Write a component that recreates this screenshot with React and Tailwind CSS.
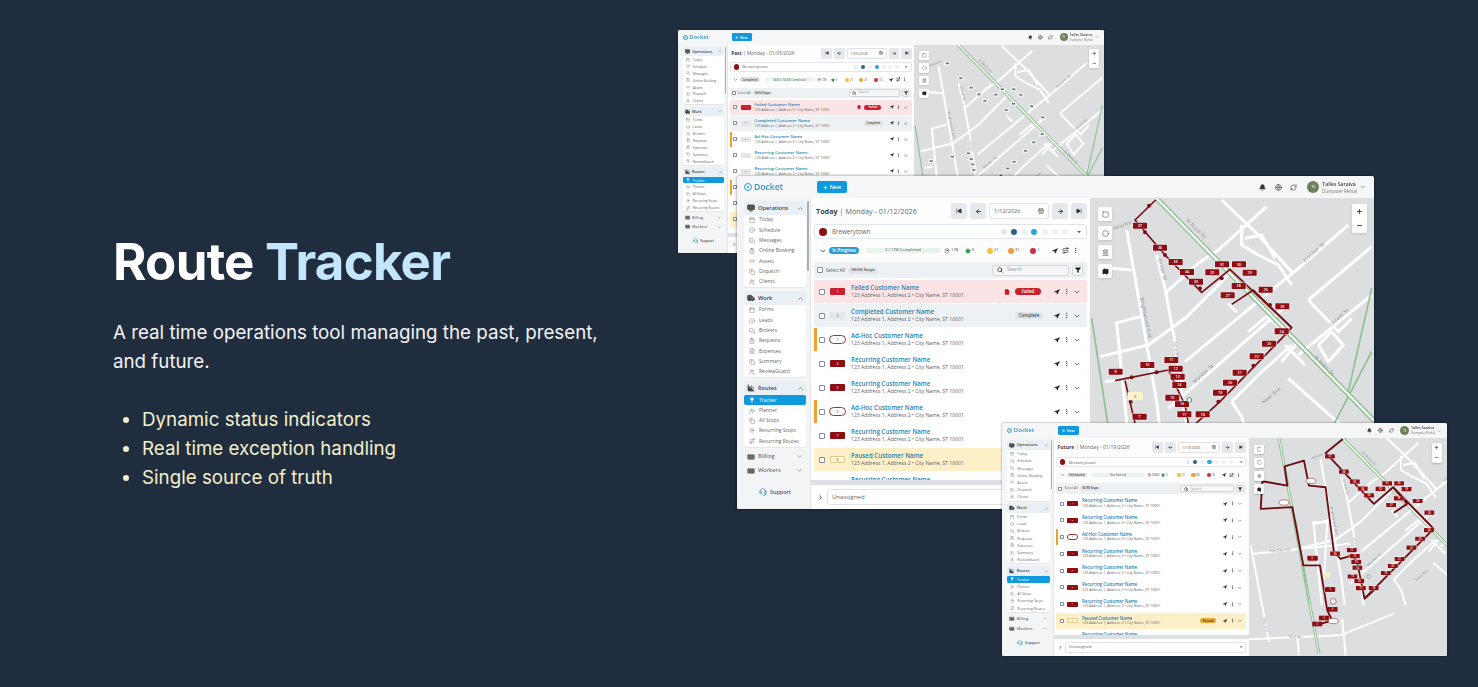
import {
  Calendar, CircleDot, MessagesSquare, ClipboardList, Link2, Copy, Users, FileText, Truck, Monitor,
  ChartColumn, Lightbulb, UserPlus, MapPin, Route, CreditCard, IdCard, ChevronUp, ChevronDown, ChevronRight,
  Headset, Search, Funnel, EllipsisVertical, Navigation, Star, Plus, ArrowLeft, ArrowRight, SkipBack, SkipForward,
  Square, Circle, Landmark, Map, Bell, Globe, RefreshCw, Minus, File, CalendarDays,
} from 'lucide-react';

const SIDEBAR = [
  {
    title: 'Operations', icon: Monitor, items: [
      ['Today', Calendar], ['Schedule', CircleDot], ['Messages', MessagesSquare], ['Online Booking', ClipboardList],
      ['Assets', Link2], ['Dispatch', Copy], ['Clients', Users],
    ],
  },
  {
    title: 'Work', icon: Truck, items: [
      ['Forms', Calendar], ['Leads', CircleDot], ['Brokers', MessagesSquare], ['Requests', ClipboardList],
      ['Expenses', FileText], ['Summary', Copy], ['ReviewGuard', Users],
    ],
  },
  {
    title: 'Routes', icon: ChartColumn, items: [
      ['Tracker', Lightbulb], ['Planner', UserPlus], ['All Stops', Copy], ['Recurring Stops', MapPin], ['Recurring Routes', Route],
    ],
  },
];

const ROWS_PAST = [
  ['failed', 'Failed Customer Name', '1'], ['completed', 'Completed Customer Name', '2'], ['adhocgray', 'Ad-Hoc Customer Name', '3'],
  ['recgray', 'Recurring Customer Name', '4'], ['recgray', 'Recurring Customer Name', '5'], ['adhocgray', 'Ad-Hoc Customer Name', '6'],
  ['recgray', 'Recurring Customer Name', '7'], ['paused', 'Paused Customer Name', '8'],
];
const ROWS_TODAY = [
  ['failed', 'Failed Customer Name', '1'], ['completed', 'Completed Customer Name', '2'], ['adhoc', 'Ad-Hoc Customer Name', '3'],
  ['recurring', 'Recurring Customer Name', '4'], ['recurring', 'Recurring Customer Name', '5'], ['adhoc', 'Ad-Hoc Customer Name', '6'],
  ['recurring', 'Recurring Customer Name', '7'], ['paused', 'Paused Customer Name', '8'], ['recurring', 'Recurring Customer Name', '9'],
];
const ROWS_FUTURE = [
  ['recurring', 'Recurring Customer Name', '1'], ['recurring', 'Recurring Customer Name', '2'], ['adhoc', 'Ad-Hoc Customer Name', '3'],
  ['recurring', 'Recurring Customer Name', '4'], ['recurring', 'Recurring Customer Name', '5'], ['recurring', 'Recurring Customer Name', '6'],
  ['recurring', 'Recurring Customer Name', '7'], ['pausedpill', 'Paused Customer Name', '8'], ['recurring', 'Recurring Customer Name', '9'],
];

// map drawn in 3x units, same streets in all three windows
const ROADS = [
  '125,165 170,420 215,680 228,790', '215,240 240,340 270,500 310,790', '90,445 165,425', '95,445 130,790',
  '45,545 190,510 300,430 440,290', '240,355 340,265 400,225 545,95', '410,75 510,170 620,290', '300,560 640,280 790,150',
  '250,700 600,395', '440,680 520,600 620,510', '440,680 470,725 490,790', '610,610 790,770', '490,470 545,425 640,500 590,560',
  '600,510 660,570', '700,510 740,470 775,510 730,560 700,510', '640,540 860,360', '670,375 760,470 800,430', '670,375 860,215',
  '470,150 470,210 520,240 580,270 620,330', '480,190 530,180 570,250', '60,620 100,615', '75,280 140,285', '430,385 455,412',
];
const GREEN = ['20,430 75,790', '725,790 860,530', '790,650 860,340'];
const STREETS = [
  ['N Main St', 330, 165, 45], ['N Main St', 715, 575, 45], ['Pioneer St', 690, 235, -42], ['Grove St', 228, 285, 75], ['Grove', 270, 525, 80],
  ['Brightwood Ave', 178, 430, 78], ['Warder St', 358, 600, -42], ['Neal Ave', 562, 665, -40], ['Locust St', 765, 430, -40], ['Atlantic', 115, 155, -20],
];
const LABELS = [
  [37, 165, 152], [36, 225, 218], [35, 272, 261], [34, 306, 291], [33, 333, 320], [32, 382, 292], [31, 411, 268], [30, 462, 268], [29, 494, 293],
  [28, 461, 333], [27, 428, 361], [26, 542, 344], [25, 592, 394], [24, 590, 469], [23, 552, 506], [22, 515, 544], [21, 464, 593], [20, 435, 623],
  [19, 405, 653], [18, 353, 718], [17, 298, 718], [16, 291, 687], [15, 262, 668], [14, 283, 630], [13, 278, 605], [12, 272, 581], [11, 259, 555],
  [10, 187, 570], [9, 92, 590], [7, 164, 725],
];
const ROUTE_MAIN = [
  '212,75 150,135 240,240 350,352 435,283 620,458 590,490 405,680 333,745',
  '620,458 505,345 440,388', '90,617 250,585 300,690 310,745', '120,617 135,680 150,745',
];
const ARROWS = [[192, 92], [180, 172], [240, 240], [345, 340], [410, 310], [505, 572], [400, 680], [140, 607], [215, 592], [137, 680], [555, 390]];

function StreetLayer() {
  return (
    <>
      {ROADS.map((d) => <polyline key={d} points={d} fill="none" stroke="#ffffff" strokeWidth="9" strokeLinejoin="round" />)}
      {GREEN.map((d) => <polyline key={d} points={d} fill="none" stroke="#8fbf92" strokeWidth="5" />)}
      <polyline points="215,70 870,740" fill="none" stroke="#8fbf92" strokeWidth="15" />
      <polyline points="215,70 870,740" fill="none" stroke="#f4f6f4" strokeWidth="7" />
      {STREETS.map(([t, x, y, r]) => (
        <text key={t + x} x={x} y={y} transform={`rotate(${r} ${x} ${y})`} textAnchor="middle" fontSize="15" fill="#868b90" letterSpacing="1">{t}</text>
      ))}
    </>
  );
}

function Flag({ n, x, y }) {
  return (
    <g>
      <rect x={x - 24} y={y - 11} width="48" height="22" fill="#ffffff" opacity="0.55" />
      <rect x={x - 21} y={y - 9} width="42" height="18" fill="#8f0d13" rx="1" />
      <text x={x} y={y + 4} textAnchor="middle" fontSize="11" fontWeight="600" fill="#ffffff">{n}</text>
    </g>
  );
}

function MapControls() {
  return (
    <>
      <div className="absolute left-[8px] top-[9px] flex flex-col gap-[5px]">
        {[Square, Circle, Landmark, Map].map((Ico, i) => (
          <div key={i} className="w-[14px] h-[14px] bg-white rounded-[2px] flex items-center justify-center shadow-sm">
            <Ico size={7} className={i === 3 ? 'text-[#222] fill-[#222]' : 'text-[#555]'} />
          </div>
        ))}
      </div>
      <div className="absolute right-[7px] top-[6px] w-[15px] h-[29px] bg-white rounded-[2px] flex flex-col items-center justify-around shadow-sm">
        <Plus size={7} strokeWidth={3} className="text-[#333]" />
        <Minus size={7} strokeWidth={3} className="text-[#333]" />
      </div>
    </>
  );
}

function MapPanel({ mode }) {
  if (mode === 'future') {
    return (
      <div className="relative flex-1 bg-[#dcdee0] overflow-hidden">
        <svg viewBox="15 57 596 653" className="w-full h-full block" style={{ fontFamily: 'Open Sans, sans-serif' }}>
          <rect x="15" y="57" width="596" height="653" fill="#dcdee0" />
          <g fill="none" stroke="#ffffff" strokeWidth="6">
            <polyline points="30,405 320,375" />
            <polyline points="205,310 250,310 240,480" />
            <polyline points="20,380 75,670" />
            <polyline points="15,662 290,650 450,585" />
            <polyline points="160,650 165,710" />
            <polyline points="295,600 305,710" />
          </g>
          <polyline points="105,57 225,705" fill="none" stroke="#8fbf92" strokeWidth="9" />
          <polyline points="105,57 225,705" fill="none" stroke="#f4f6f4" strokeWidth="3" />
          <text x="108" y="398" textAnchor="middle" fontSize="10" fill="#868b90" transform="rotate(-5 108 398)">Five Oaks Ave</text>
          <text x="62" y="620" textAnchor="middle" fontSize="10" fill="#868b90" transform="rotate(78 62 620)">Morris St</text>
          <text x="155" y="658" textAnchor="middle" fontSize="10" fill="#868b90">Neal Ave</text>
          <g transform="translate(142.5 5.6) scale(0.7)">
            <StreetLayer />
          </g>
          <g fill="none" stroke="#6d0b10" strokeWidth="5.5" strokeLinejoin="round">
            <polyline points="297,60 245,102 258,115 390,255 448,205 570,330 500,400 362,540 340,430 325,410 290,420 270,400 245,205 195,200 180,125 122,142 130,200 55,187 50,270 145,265 178,440 228,440 250,575 265,605 215,620" />
            <polyline points="448,205 490,255 450,282" />
            <polyline points="362,540 400,505" />
          </g>
          <g transform="translate(142.5 5.6) scale(0.7)">
            {LABELS.map(([n, x, y]) => <Flag key={n} n={n} x={x} y={y} />)}
          </g>
          {[[205, 418, 6], [259, 512, 5], [266, 572, 4], [240, 598, 3], [220, 616, 2]].map(([x, y, n]) => (
            <g key={n}>
              <rect x={x - 15} y={y - 7} width="30" height="14" fill="#8f0d13" />
              <text x={x} y={y + 3} textAnchor="middle" fontSize="8" fill="#fff">{n}</text>
            </g>
          ))}
          <rect x="238" y="462" width="20" height="14" fill="#fbf0c0" />
          {[[120, 251], [201, 186], [268, 607]].map(([x, y]) => (
            <ellipse key={x} cx={x} cy={y} rx="15" ry="8" fill="#fff" stroke="#8f0d13" strokeWidth="1.5" />
          ))}
          <circle cx="268" cy="548" r="9" fill="#f3f3f3" stroke="#8f0d13" strokeWidth="1.5" />
          <circle cx="374" cy="473" r="5" fill="#fff" stroke="#3a9a55" strokeWidth="2" />
        </svg>
        <MapControls />
      </div>
    );
  }
  return (
    <div className="relative flex-1 bg-[#dcdee0] overflow-hidden">
      <svg viewBox="15 69 852 933" className="w-full h-full block" style={{ fontFamily: 'Open Sans, sans-serif' }}>
        <StreetLayer />
        {mode === 'today' && (
          <>
            {ROUTE_MAIN.map((d) => <polyline key={d} points={d} fill="none" stroke="#7a1016" strokeWidth="5" strokeLinejoin="round" />)}
            {ARROWS.map(([x, y]) => <circle key={x + '-' + y} cx={x} cy={y} r="6" fill="#7a1016" />)}
            {LABELS.map(([n, x, y]) => <Flag key={n} n={n} x={x} y={y} />)}
            <rect x="128" y="651" width="46" height="25" rx="2" fill="#fbf3cf" />
            <text x="151" y="668" textAnchor="middle" fontSize="11" fill="#6b5a10">8</text>
            <circle cx="313" cy="675" r="7" fill="#fff" stroke="#3a9a55" strokeWidth="3" />
          </>
        )}
        {mode === 'past' && LABELS.map(([n, x, y]) => (
          <g key={n}>
            <rect x={x - 13} y={y - 9} width="26" height="18" fill="#f2f3f4" />
            <rect x={x - 7} y={y - 4} width="14" height="7" fill="#6b7075" />
          </g>
        ))}
      </svg>
      <MapControls />
    </div>
  );
}

function Sidebar() {
  return (
    <div className="w-[73px] shrink-0 bg-[#f2f4f6] flex flex-col pl-[7px] pr-[4px] pt-[3px] gap-[4px] relative">
      {SIDEBAR.map((group) => (
        <div key={group.title} className="bg-white rounded-[3px] shadow-[0_1px_1px_rgba(0,0,0,0.06)]">
          <div className="h-[14px] bg-[#e9f0f5] rounded-t-[3px] flex items-center pl-[3px] pr-[2px] gap-[3px]">
            <group.icon size={8} className="text-[#333] fill-[#555]" />
            <span className="text-[5.6px] font-semibold text-[#444] flex-1">{group.title}</span>
            <ChevronUp size={7} className="text-[#555]" />
          </div>
          {group.items.map(([label, Ico]) => {
            const active = label === 'Tracker';
            return (
              <div key={label} className={`h-[10.3px] flex items-center gap-[4px] pl-[5px] rounded-[2px] ${active ? 'bg-[#0f9ae0] text-white' : 'text-[#666]'}`}>
                <Ico size={6} strokeWidth={1.5} className={active ? 'fill-white' : ''} />
                <span className="text-[5px] whitespace-nowrap">{label}</span>
              </div>
            );
          })}
        </div>
      ))}
      <div className="h-[12px] flex items-center px-[3px] gap-[3px] text-[#777]">
        <CreditCard size={8} className="fill-[#666]" />
        <span className="text-[5.6px] font-semibold flex-1">Billing</span>
        <ChevronDown size={7} />
      </div>
      <div className="h-[12px] -mt-[2px] flex items-center px-[3px] gap-[3px] text-[#777]">
        <IdCard size={8} className="fill-[#666]" />
        <span className="text-[5.6px] font-semibold flex-1">Workers</span>
        <ChevronDown size={7} />
      </div>
      <div className="mt-[7px] flex items-center justify-center gap-[3px] text-[#556]">
        <Headset size={8} className="text-[#2b8fc4]" />
        <span className="text-[5.4px] font-semibold">Support</span>
      </div>
      <div className="absolute right-[1px] top-[3px] w-[2px] h-[70px] bg-[#a9afb5] rounded" />
    </div>
  );
}

function Badge({ kind, n }) {
  if (kind === 'failed') return <div className="w-[15px] h-[7px] bg-[#c8202f] rounded-[1px] text-white text-[3.5px] flex items-center justify-center">{n}</div>;
  if (kind === 'completed' || kind === 'recgray' || kind === 'adhocgray') return <div className="w-[15px] h-[7px] bg-[#e3e5e8] rounded-[1px] text-[#555] text-[3.5px] flex items-center justify-center">{n}</div>;
  if (kind === 'adhoc') return <div className="w-[17px] h-[9px] -mx-[1px] bg-white border border-[#8f3a40] rounded-full text-[#555] text-[3.5px] flex items-center justify-center">{n}</div>;
  if (kind === 'paused' || kind === 'pausedpill') return <div className="w-[15px] h-[7px] bg-[#fff7d8] border-[0.5px] border-[#e0c98a] rounded-[1px] text-[#6b5a10] text-[3.5px] flex items-center justify-center">{n}</div>;
  return <div className="w-[15px] h-[7px] bg-[#8f0d13] rounded-[1px] text-white text-[3.5px] flex items-center justify-center">{n}</div>;
}

function StopRow({ kind, name, n }) {
  const bg = kind === 'failed' ? 'bg-[#fbe4e5]'
    : kind === 'completed' ? 'bg-[#edf1f4]'
      : kind === 'paused' || kind === 'pausedpill' ? 'bg-[#fdefc8]'
        : 'bg-white';
  const strip = kind === 'adhoc' || kind === 'adhocgray';
  return (
    <div className={`h-[23px] shrink-0 flex items-center pl-[5px] pr-[6px] rounded-[2px] relative ${bg}`}>
      {strip && <div className="absolute left-0 top-0 bottom-0 w-[2.5px] bg-[#f0a12b]" />}
      <div className="w-[6px] h-[6px] border-[0.5px] border-[#8a8f95] rounded-[1px] bg-white" />
      <div className="w-[15px] ml-[5px] flex justify-center"><Badge kind={kind} n={n} /></div>
      <div className="ml-[6px] flex-1 min-w-0">
        <div className={`text-[6.2px] leading-[8px] font-semibold whitespace-nowrap ${kind === 'paused' || kind === 'pausedpill' ? 'text-[#1f7fa8]' : 'text-[#2a82b0]'}`}>{name}</div>
        <div className="text-[5.1px] leading-[7px] text-[#5d6268] whitespace-nowrap">123 Address 1, Address 2 • City Name, ST 10001</div>
      </div>
      {kind === 'failed' && (
        <>
          <File size={6} className="text-[#c8202f] fill-[#c8202f] mr-[5px]" />
          <div className="h-[7px] w-[26px] bg-[#c8202f] rounded-full text-white text-[4.4px] font-semibold flex items-center justify-center mr-[13px]">Failed</div>
        </>
      )}
      {kind === 'completed' && <div className="h-[7px] w-[28px] bg-[#e0e3e6] rounded-full text-[#444] text-[4.4px] font-semibold flex items-center justify-center mr-[11px]">Complete</div>}
      {kind === 'pausedpill' && <div className="h-[7px] w-[22px] bg-[#e3a92c] rounded-full text-[#533] text-[4.4px] font-semibold flex items-center justify-center mr-[11px]">Paused</div>}
      <Navigation size={6} className="text-[#222] fill-[#222]" />
      <EllipsisVertical size={7} className="text-[#333] ml-[3px]" />
      <ChevronDown size={8} className="text-[#333] ml-[3px]" />
    </div>
  );
}

function CenterPanel({ label, date, input, pillText, pillClass, barText, counts, rows }) {
  return (
    <div className="w-[280px] shrink-0 bg-[#fdfdfe] flex flex-col min-h-0 border-l border-[#e3e6e9]">
      <div className="h-[26px] shrink-0 flex items-center pl-[5px] pr-[3px] text-[#666]">
        <span className="text-[7.2px] font-bold text-[#444]">{label}</span>
        <span className="text-[7.2px] ml-[2px] flex-1 whitespace-nowrap">| {date}</span>
        <div className="w-[16px] h-[16px] bg-[#e5e9ee] rounded-[2px] flex items-center justify-center"><SkipBack size={6} className="text-[#333] fill-[#333]" /></div>
        <div className="w-[16px] h-[16px] ml-[3px] bg-[#e5e9ee] rounded-[2px] flex items-center justify-center"><ArrowLeft size={7} strokeWidth={3} className="text-[#333]" /></div>
        <div className="w-[60px] h-[16px] ml-[3px] border border-[#dfe3e7] rounded-[3px] flex items-center justify-between px-[4px] text-[5.6px]">
          {input}
          <CalendarDays size={6} className="text-[#444]" />
        </div>
        <div className="w-[16px] h-[16px] ml-[3px] bg-[#e5e9ee] rounded-[2px] flex items-center justify-center"><ArrowRight size={7} strokeWidth={3} className="text-[#333]" /></div>
        <div className="w-[16px] h-[16px] ml-[3px] bg-[#e5e9ee] rounded-[2px] flex items-center justify-center"><SkipForward size={6} className="text-[#333] fill-[#333]" /></div>
      </div>
      <div className="mx-[3px] h-[15px] shrink-0 border border-[#e3e6e9] rounded-[3px] flex items-center px-[4px] bg-white">
        <div className="w-[8px] h-[8px] rounded-full bg-[#8f0d13]" />
        <span className="text-[6.2px] text-[#666] ml-[5px] flex-1">Brewerytown</span>
        <div className="flex items-center gap-[4.2px] mr-[8px]">
          {['bg-[#e6e8ea]', 'bg-[#2f5f88]', 'bg-[#eef0f1]', 'bg-[#2ba3dc]', 'bg-[#eef0f1]', 'bg-[#eef0f1]', 'bg-[#eef0f1]'].map((c, i) => (
            <div key={i} className={`w-[6px] h-[6px] rounded-full ${c}`} />
          ))}
        </div>
        <ChevronDown size={6} className="text-[#333] fill-[#333]" />
      </div>
      <div className="h-[23px] shrink-0 flex items-center pl-[8px] pr-[6px] text-[#444]">
        <ChevronDown size={8} className="text-[#333]" />
        <div className={`ml-[2px] w-[30px] h-[7px] rounded-full text-[4.4px] font-semibold flex items-center justify-center ${pillClass}`}>{pillText}</div>
        <div className="ml-[7px] w-[74px] h-[5px] bg-[#e8f3ea] rounded-[1px] text-[4.2px] text-[#555] flex items-center justify-center whitespace-nowrap">{barText}</div>
        <MapPin size={6} className="ml-[4px] text-[#555]" />
        <span className="text-[4.2px] ml-[1px] w-[14px]">{counts[0]}</span>
        <Star size={6} className="text-[#2f8f4f] fill-[#2f8f4f]" />
        <span className="text-[4.2px] ml-[1px] w-[15px]">{counts[1]}</span>
        <div className="w-[6px] h-[6px] rounded-full bg-[#eec23e]" />
        <span className="text-[4.2px] ml-[1px] w-[14px]">{counts[2]}</span>
        <div className="w-[6px] h-[6px] rounded-full bg-[#eda13a]" />
        <span className="text-[4.2px] ml-[1px] w-[15px]">{counts[3]}</span>
        <div className="w-[6px] h-[6px] rounded-full bg-[#c8303f]" />
        <span className="text-[4.2px] ml-[1px] w-[15px]">{counts[4]}</span>
        <Navigation size={6} className="text-[#222] fill-[#222]" />
        <Route size={7} className="text-[#222] ml-[4px]" />
        <EllipsisVertical size={7} className="text-[#333] ml-[3px]" />
      </div>
      <div className="mx-[3px] h-[16px] shrink-0 bg-[#eef1f4] flex items-center pl-[3px] pr-[4px] rounded-[2px]">
        <div className="w-[6px] h-[6px] border-[0.5px] border-[#8a8f95] rounded-[1px] bg-white" />
        <span className="text-[4.6px] text-[#555] ml-[3px]">Select All</span>
        <div className="ml-[3px] h-[7px] w-[30px] bg-[#e3e6ea] rounded-full text-[4.2px] font-semibold text-[#444] flex items-center justify-center">56/56 Stops</div>
        <div className="ml-auto w-[77px] h-[11px] bg-[#f4f6f7] border border-[#d2d6da] rounded-[3px] flex items-center px-[4px] gap-[4px]">
          <Search size={6} strokeWidth={3} className="text-[#333]" />
          <span className="text-[4.8px] text-[#999]">Search</span>
        </div>
        <div className="ml-[3px] w-[11px] h-[11px] bg-[#f8f9fa] border border-[#d2d6da] rounded-[3px] flex items-center justify-center"><Funnel size={6} className="text-[#222] fill-[#222]" /></div>
      </div>
      <div className="flex-1 min-h-0 overflow-hidden mx-[3px] mt-[2px] flex flex-col gap-[1px]">
        {rows.map(([kind, name, n], i) => <StopRow key={i} kind={kind} name={name} n={n} />)}
      </div>
      <div className="h-[5px] shrink-0 bg-[#dde1e5]" />
      <div className="h-[24px] shrink-0 flex items-center pl-[6px] pr-[3px] bg-white">
        <ChevronRight size={7} strokeWidth={3} className="text-[#333]" />
        <div className="ml-[3px] flex-1 h-[16px] border border-[#dfe3e7] rounded-[3px] flex items-center justify-between px-[4px]">
          <span className="text-[6px] text-[#666]">Unassigned</span>
          <ChevronDown size={6} className="text-[#333] fill-[#333]" />
        </div>
      </div>
    </div>
  );
}

// one Docket app window, always laid out at 637x333 then zoomed down
function DocketWindow({ zoomClass, mode, ...center }) {
  return (
    <div className={`${zoomClass} w-[637px] h-[333px] bg-[#f4f6f8] flex flex-col rounded-[2px] overflow-hidden shadow-[0_0_3px_rgba(0,0,0,0.55)] blur-[0.7px]`}>
      <div className="h-[22px] shrink-0 flex items-center">
        <div className="w-[80px] pl-[7px] flex items-center gap-[2px]">
          <div className="w-[8px] h-[8px] rounded-full border-[1.5px] border-[#2b9bd4] flex items-center justify-center"><div className="w-[2px] h-[2px] rounded-full bg-[#2b9bd4]" /></div>
          <span className="text-[8.6px] font-semibold text-[#3a92c4]">Docket</span>
        </div>
        <div className="w-[30px] h-[12px] bg-[#0f9ae0] rounded-[2px] text-white text-[5.4px] font-semibold flex items-center justify-center gap-[2px]">
          <Plus size={5} strokeWidth={4} />New
        </div>
        <div className="ml-auto flex items-center pr-[8px] text-[#444]">
          <Bell size={7} className="fill-[#333]" />
          <Globe size={7} className="ml-[9px]" />
          <RefreshCw size={7} className="ml-[8px] mr-[10px]" />
          <div className="w-[12px] h-[12px] rounded-full bg-[#6f7f5c] text-[4px] text-white flex items-center justify-center">TS</div>
          <div className="ml-[3px] mr-[3px]">
            <div className="text-[5.1px] leading-[7px] font-semibold text-[#444] whitespace-nowrap">Talles Saraiva</div>
            <div className="text-[4.4px] leading-[6px] text-[#777] whitespace-nowrap">Dumpster Rental</div>
          </div>
          <ChevronDown size={6} />
        </div>
      </div>
      <div className="flex flex-1 min-h-0">
        <Sidebar />
        <CenterPanel {...center} />
        <MapPanel mode={mode} />
      </div>
    </div>
  );
}

export default function App() {
  return (
    <div className="w-[1478px] h-[687px] bg-[#202d3f] flex overflow-hidden" style={{ fontFamily: 'Open Sans, sans-serif' }}>
      <div className="w-[678px] shrink-0 pl-[113px] pt-[230px]" style={{ fontFamily: 'Inter, sans-serif' }}>
        <h1 className="text-[51px] leading-[63px] font-bold tracking-[-0.75px] text-white">
          Route <span className="text-[#c4e6fc]">Tracker</span>
        </h1>
        <p className="mt-[25px] text-[18.75px] leading-[29px] text-[#f1f3f5] w-[500px]">
          A real time operations tool managing the past, present, and future.
        </p>
        <ul className="mt-[29px] pl-[29px] list-disc text-[18.75px] leading-[29px] text-[#f3efcb] marker:text-[#f3efcb]">
          <li>Dynamic status indicators</li>
          <li>Real time exception handling</li>
          <li>Single source of truth</li>
        </ul>
      </div>
      {/* collage of overlapping screenshots */}
      <div className="relative flex-1">
        <div className="absolute left-0 top-[30px]">
          <DocketWindow
            zoomClass="[zoom:0.669]" mode="past" label="Past" date="Monday - 01/05/2026" input="1/05/2026"
            pillText="Completed" pillClass="bg-[#dde1e5] text-[#555]" barText="56/60 / 56/56 Completed"
            counts={['178', '5', '21', '21', '16']} rows={ROWS_PAST}
          />
        </div>
        <div className="absolute left-[59px] top-[176px]">
          <DocketWindow
            zoomClass="" mode="today" label="Today" date="Monday - 01/12/2026" input="1/12/2026"
            pillText="In Progress" pillClass="bg-[#2b9bd4] text-white" barText="2 / 178 Completed"
            counts={['178', '5', '21', '31', '1']} rows={ROWS_TODAY}
          />
        </div>
        <div className="absolute left-[324px] top-[423px]">
          <DocketWindow
            zoomClass="[zoom:0.6986]" mode="future" label="Future" date="Monday - 01/19/2026" input="1/19/2026"
            pillText="Scheduled" pillClass="bg-[#dde1e5] text-[#555]" barText="Not Started"
            counts={['0/660', '5', '21', '96', '16']} rows={ROWS_FUTURE}
          />
        </div>
      </div>
    </div>
  );
}
